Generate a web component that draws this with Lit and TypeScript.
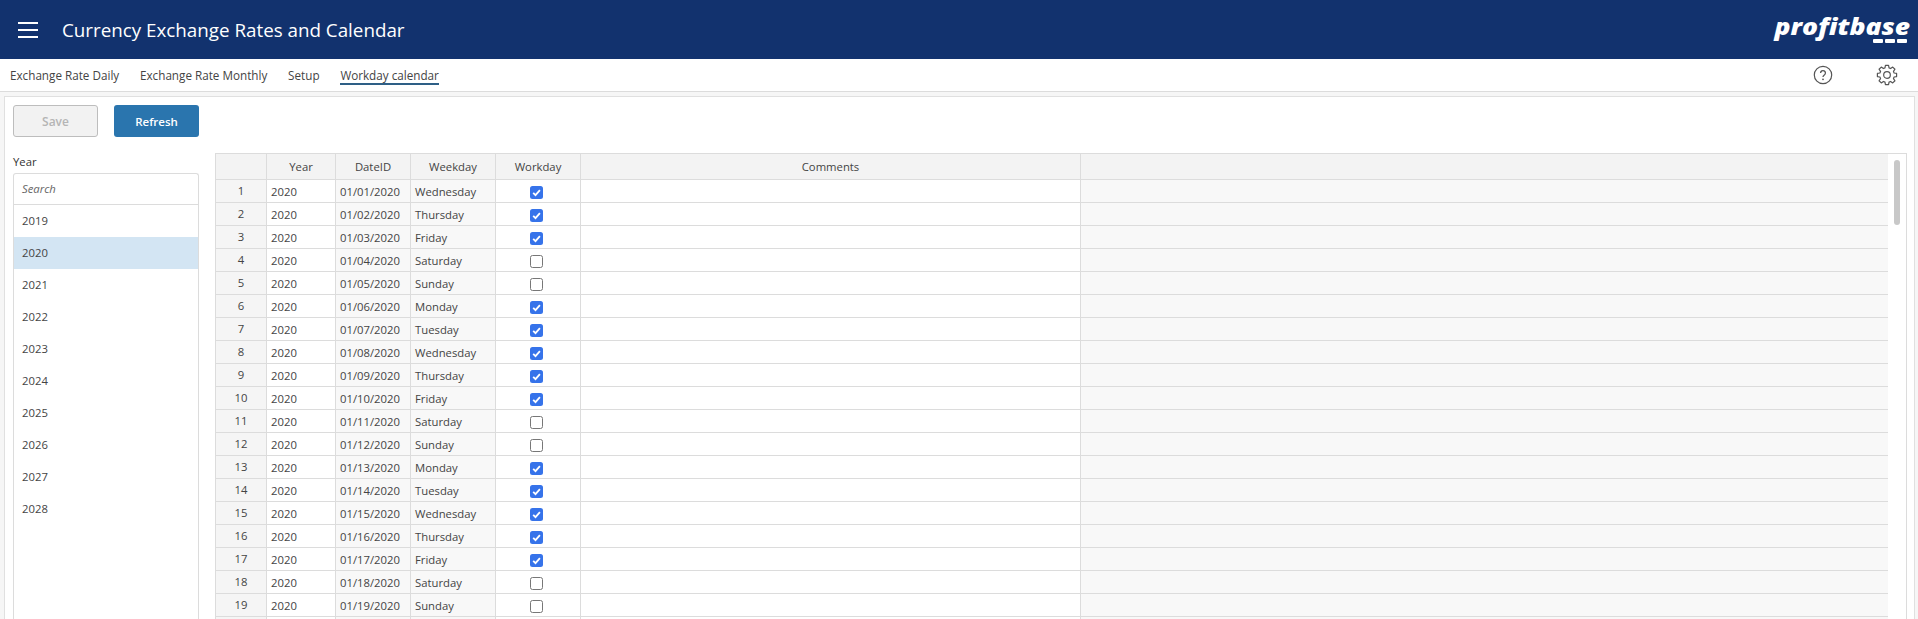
import { LitElement, html, css, svg } from "lit";
import { customElement } from "lit/decorators.js";

const DAYS = ["Wednesday", "Thursday", "Friday", "Saturday", "Sunday", "Monday", "Tuesday"];
const YEARS = [2019, 2020, 2021, 2022, 2023, 2024, 2025, 2026, 2027, 2028];

const rows = Array.from({ length: 19 }, (_, i) => {
  const weekday = DAYS[i % 7];
  return {
    n: i + 1,
    date: `01/${String(i + 1).padStart(2, "0")}/2020`,
    weekday,
    work: weekday !== "Saturday" && weekday !== "Sunday",
  };
});

const gear = svg`<path d="M10.3 2.6h3.4l.5 2.7 1.7.7 2.3-1.6 2.4 2.4-1.6 2.3.7 1.7 2.7.5v3.4l-2.7.5-.7 1.7 1.6 2.3-2.4 2.4-2.3-1.6-1.7.7-.5 2.7h-3.4l-.5-2.7-1.7-.7-2.3 1.6-2.4-2.4 1.6-2.3-.7-1.7-2.7-.5v-3.4l2.7-.5.7-1.7-1.6-2.3 2.4-2.4 2.3 1.6 1.7-.7z" fill="none" stroke="#555" stroke-width="1.3" stroke-linejoin="round"/><circle cx="12" cy="13" r="3.6" fill="none" stroke="#555" stroke-width="1.3"/>`;

@customElement("app-root")
export class AppRoot extends LitElement {
  static styles = css`
    :host {
      display: block;
      height: 619px;
      overflow: hidden;
      background: #f6f6f6;
      font-family: "Open Sans", "Liberation Sans", sans-serif;
      font-size: 11.3px;
      color: #444;
    }
    .header {
      height: 59px;
      background: #12326e;
      display: flex;
      align-items: center;
      color: #fff;
    }
    .burger {
      width: 20px;
      margin: 0 24px 0 18px;
      display: flex;
      flex-direction: column;
      gap: 5px;
    }
    .burger span {
      height: 2px;
      background: #fff;
    }
    .title {
      font-size: 18.8px;
      flex: 1;
    }
    .logo {
      width: 140px;
      margin: 0 8px 2px 0;
      display: flex;
      flex-direction: column;
      align-items: flex-end;
    }
    .logo-text {
      font-size: 22px;
      line-height: 25px;
      font-weight: 800;
      font-style: italic;
      transform: scaleX(1.2);
      transform-origin: right center;
    }
    .dashes {
      display: flex;
      gap: 2px;
      margin-right: 3px;
    }
    .dashes span {
      width: 10px;
      height: 4px;
      border-radius: 1px;
      background: #fff;
    }
    .tabs {
      height: 32px;
      display: flex;
      align-items: center;
      gap: 20.8px;
      padding: 0 10px;
      background: #fff;
      border-bottom: 1px solid #dcdcdc;
      font-size: 11.7px;
    }
    .tab {
      line-height: 15px;
      margin-top: 3px;
      border-bottom: 2px solid transparent;
      color: #444;
    }
    .tab.active {
      border-bottom-color: #2e5f86;
    }
    .tools {
      margin-left: auto;
      display: flex;
      align-items: center;
      gap: 42px;
      padding-right: 9px;
    }
    .tools svg {
      display: block;
    }
    .panel {
      margin: 4px 3px 0 4px;
      height: 540px;
      background: #fff;
      border: 1px solid #e0e0e0;
      border-bottom: none;
      padding: 8px 7px 0 8px;
    }
    .actions {
      display: flex;
      gap: 16px;
      height: 32px;
    }
    .btn {
      width: 85px;
      box-sizing: border-box;
      border-radius: 3px;
      display: flex;
      align-items: center;
      justify-content: center;
      font-size: 11.5px;
      font-weight: 600;
    }
    .btn.save {
      background: #f2f2f2;
      border: 1px solid #bdbdbd;
      color: #b5b5b5;
      font-size: 12px;
    }
    .btn.refresh {
      background: #2a75ae;
      color: #fff;
    }
    .body {
      display: flex;
      gap: 16px;
      margin-top: 16px;
    }
    .side {
      width: 186px;
      flex: none;
    }
    .side-label {
      height: 20px;
      line-height: 17px;
      color: #333;
    }
    .list {
      box-sizing: border-box;
      height: 460px;
      border: 1px solid #dcdcdc;
      border-bottom: none;
      border-radius: 3px 3px 0 0;
    }
    .search {
      height: 30px;
      line-height: 30px;
      padding-left: 8px;
      border-bottom: 1px solid #dcdcdc;
      font-style: italic;
      color: #666;
    }
    .year {
      height: 32px;
      line-height: 32px;
      padding-left: 8px;
    }
    .year.selected {
      background: #d3e5f3;
    }
    .grid {
      position: relative;
      width: 1692px;
      flex: none;
      height: 466px;
      overflow: hidden;
      box-sizing: border-box;
      border: 1px solid #dcdcdc;
      border-bottom: none;
    }
    .row {
      display: grid;
      grid-template-columns: 51px 69px 75px 85px 85px 500px 807px;
      grid-template-rows: 22px;
      width: 1672px;
      height: 23px;
      box-sizing: border-box;
      border-bottom: 1px solid #dcdcdc;
    }
    .row.head {
      height: 26px;
      grid-template-rows: 25px;
      background: #f3f3f3;
    }
    .cell {
      box-sizing: border-box;
      border-right: 1px solid #dcdcdc;
      padding: 2px 0 0 4px;
      line-height: 20px;
      white-space: nowrap;
    }
    .cell:last-child {
      border-right: none;
    }
    .head .cell {
      text-align: center;
      line-height: 25px;
      padding: 0;
    }
    .cell.num {
      background: #f5f5f5;
      text-align: center;
      padding: 0;
      line-height: 22px;
    }
    .shade {
      background: #f8f8f8;
    }
    .cell.check {
      padding: 0 4px 0 0;
      display: flex;
      align-items: center;
      justify-content: center;
    }
    .box {
      width: 13px;
      height: 13px;
      box-sizing: border-box;
      border-radius: 2.5px;
      border: 1px solid #777;
      background: #fff;
      margin-top: 3px;
    }
    .box svg {
      display: none;
    }
    .box.on {
      border: none;
      background: #3673ea;
    }
    .box.on svg {
      display: block;
    }
    .thumb {
      position: absolute;
      left: 1678px;
      top: 6px;
      width: 6px;
      height: 65px;
      border-radius: 3px;
      background: #c8c8c8;
    }
  `;

  render() {
    return html`
      <div class="header">
        <div class="burger"><span></span><span></span><span></span></div>
        <div class="title">Currency Exchange Rates and Calendar</div>
        <div class="logo">
          <div class="logo-text">profitbase</div>
          <div class="dashes"><span></span><span></span><span></span></div>
        </div>
      </div>
      <div class="tabs">
        <div class="tab">Exchange Rate Daily</div>
        <div class="tab">Exchange Rate Monthly</div>
        <div class="tab">Setup</div>
        <div class="tab active">Workday calendar</div>
        <div class="tools">
          <svg width="20" height="20" viewBox="0 0 20 20">
            <circle cx="10" cy="10" r="8.7" fill="none" stroke="#555" stroke-width="1.2" />
            <path d="M7.6 8a2.4 2.4 0 1 1 3.7 2c-.9.6-1.3 1-1.3 2" fill="none" stroke="#555" stroke-width="1.3" />
            <circle cx="10" cy="14.3" r=".9" fill="#555" />
          </svg>
          <svg width="24" height="24" viewBox="0 0 24 26">${gear}</svg>
        </div>
      </div>
      <div class="panel">
        <div class="actions">
          <div class="btn save">Save</div>
          <div class="btn refresh">Refresh</div>
        </div>
        <div class="body">
          <div class="side">
            <div class="side-label">Year</div>
            <div class="list">
              <div class="search">Search</div>
              ${YEARS.map(
                (y) => html`<div class="year ${y === 2020 ? "selected" : ""}">${y}</div>`
              )}
            </div>
          </div>
          <div class="grid">
            <div class="row head">
              <div class="cell"></div>
              <div class="cell">Year</div>
              <div class="cell">DateID</div>
              <div class="cell">Weekday</div>
              <div class="cell">Workday</div>
              <div class="cell">Comments</div>
              <div class="cell"></div>
            </div>
            ${rows.map(
              (r) => html`<div class="row">
                <div class="cell num">${r.n}</div>
                <div class="cell">2020</div>
                <div class="cell shade">${r.date}</div>
                <div class="cell shade">${r.weekday}</div>
                <div class="cell check">
                  <div class="box ${r.work ? "on" : ""}">
                    <svg width="13" height="13" viewBox="0 0 13 13">
                      <path d="M3.2 6.8l2.3 2.3 4.4-5" fill="none" stroke="#fff" stroke-width="1.8" />
                    </svg>
                  </div>
                </div>
                <div class="cell"></div>
                <div class="cell shade"></div>
              </div>`
            )}
            <div class="row">
              <div class="cell num"></div>
              <div class="cell"></div>
              <div class="cell shade"></div>
              <div class="cell shade"></div>
              <div class="cell"></div>
              <div class="cell"></div>
              <div class="cell shade"></div>
            </div>
            <div class="thumb"></div>
          </div>
        </div>
      </div>
    `;
  }
}
